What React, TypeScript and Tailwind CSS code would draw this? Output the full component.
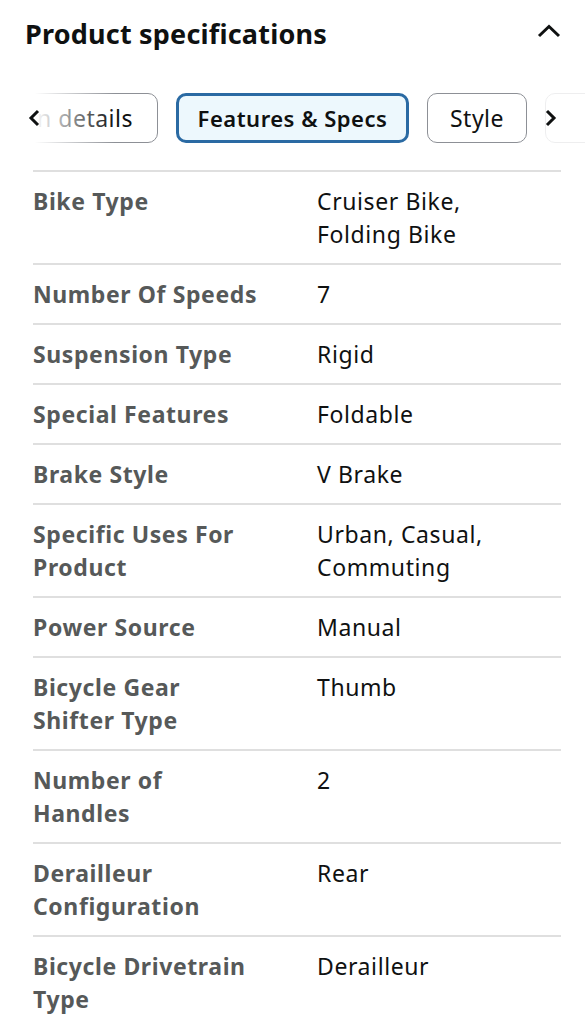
import React from 'react';

const specs: { label: string[]; value: string[] }[] = [
  { label: ['Bike Type'], value: ['Cruiser Bike,', 'Folding Bike'] },
  { label: ['Number Of Speeds'], value: ['7'] },
  { label: ['Suspension Type'], value: ['Rigid'] },
  { label: ['Special Features'], value: ['Foldable'] },
  { label: ['Brake Style'], value: ['V Brake'] },
  { label: ['Specific Uses For', 'Product'], value: ['Urban, Casual,', 'Commuting'] },
  { label: ['Power Source'], value: ['Manual'] },
  { label: ['Bicycle Gear', 'Shifter Type'], value: ['Thumb'] },
  { label: ['Number of', 'Handles'], value: ['2'] },
  { label: ['Derailleur', 'Configuration'], value: ['Rear'] },
  { label: ['Bicycle Drivetrain', 'Type'], value: ['Derailleur'] },
];

const App: React.FC = () => {
  return (
    <div className="w-[585px] h-[1024px] overflow-hidden bg-white font-['Noto_Sans',sans-serif]">
      {/* Header */}
      <div className="flex items-center justify-between pl-[25px] pr-[24px] pt-[2px] h-[66px]">
        <h1 className="text-[27px] font-bold text-[#0f1111] tracking-[0.2px] whitespace-nowrap">Product specifications</h1>
        <svg width="24" height="14" viewBox="0 0 24 14" className="mb-[6px]">
          <path d="M2 12 L12 2.5 L22 12" fill="none" stroke="#0f1111" strokeWidth="3" />
        </svg>
      </div>

      {/* Tabs */}
      <div className="relative h-[50px] mt-[27px] overflow-hidden">
        <div className="flex gap-[18px] absolute left-[-80px] top-0">
          <div className="w-[238px] shrink-0 h-[50px] pr-[24px] flex items-center justify-end border border-[#8d9096] rounded-[10px] text-[23px] tracking-[0.5px] text-[#0f1111] whitespace-nowrap">
            Design details
          </div>
          <div className="w-[233px] shrink-0 h-[50px] flex items-center justify-center border-[3px] border-[#2a6aa3] bg-[#edf8fd] rounded-[10px] text-[22px] tracking-[0.5px] font-semibold text-[#0f1111] whitespace-nowrap">
            Features &amp; Specs
          </div>
          <div className="w-[100px] shrink-0 h-[50px] flex items-center justify-center border border-[#8d9096] rounded-[10px] text-[23px] tracking-[0.5px] text-[#0f1111] whitespace-nowrap">
            Style
          </div>
          <div className="w-[120px] shrink-0 h-[50px] border border-[#8d9096] rounded-[10px]" />
        </div>
        {/* left fade */}
        <div className="absolute left-0 top-0 h-[50px] w-[115px] bg-gradient-to-r from-white from-[30%] to-transparent" />
        <svg width="12" height="18" viewBox="0 0 12 18" className="absolute left-[28px] top-[16px]">
          <path d="M10 2 L3 9 L10 16" fill="none" stroke="#0f1111" strokeWidth="3" />
        </svg>
        {/* right fade */}
        <div className="absolute right-0 top-0 h-[50px] w-[42px] bg-white/85" />
        <svg width="12" height="18" viewBox="0 0 12 18" className="absolute left-[545px] top-[16px]">
          <path d="M2 2 L9 9 L2 16" fill="none" stroke="#0f1111" strokeWidth="3" />
        </svg>
      </div>

      {/* Table */}
      <div className="mx-[33px] mt-[27px] w-[528px]">
        {specs.map((s) => (
          <div key={s.label.join(' ')} className="flex border-t-2 border-[#dfdfdf] pt-[13px] pb-[12px] leading-[33px] text-[23px] tracking-[0.6px]">
            <div className="w-[284px] shrink-0 font-bold text-[#565959] whitespace-nowrap">
              {s.label.map((l) => (
                <div key={l}>{l}</div>
              ))}
            </div>
            <div className="text-[#0f1111] whitespace-nowrap">
              {s.value.map((v) => (
                <div key={v}>{v}</div>
              ))}
            </div>
          </div>
        ))}
      </div>
    </div>
  );
};

export default App;
